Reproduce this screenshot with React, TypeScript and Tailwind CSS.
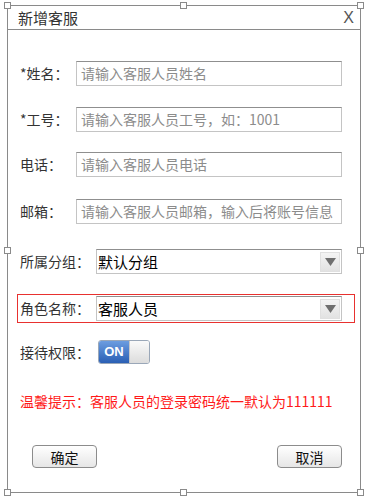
import React from "react";

const font = { fontFamily: '"Noto Sans CJK SC", "Liberation Sans", sans-serif' };

function Handle({ className }: { className: string }) {
  return <div className={`absolute w-[7px] h-[7px] bg-white border border-[#8a8a8a] ${className}`} />;
}

function TextInput({ placeholder }: { placeholder: string }) {
  return (
    <div className="w-[266px] h-[25px] border border-[#c4c4c4] border-t-[#8f8f8f] bg-white flex items-center pl-[4px] overflow-hidden whitespace-nowrap text-[14px] text-[#8c8c8c]">
      {placeholder}
    </div>
  );
}

function Select({ value }: { value: string }) {
  return (
    <div className="w-[246px] h-[25px] border border-[#c4c4c4] border-t-[#8f8f8f] bg-white flex items-center justify-between">
      <span className="pl-[1px] text-[15px] text-black leading-none">{value}</span>
      <div className="w-[20px] h-[20px] mr-[1px] bg-gradient-to-b from-[#f4f4f4] to-[#e2e2e2] border border-[#e0e0e0] flex items-center justify-center">
        <svg width="11" height="8" viewBox="0 0 11 8">
          <polygon points="0,0 11,0 5.5,8" fill="#6f6f6f" />
        </svg>
      </div>
    </div>
  );
}

export default function App() {
  return (
    <div className="relative w-[365px] h-[498px] bg-white" style={font}>
      <div className="absolute left-[183px] top-0 w-[1px] h-[3px] bg-[#e8803a]" />
      <div className="relative ml-[7px] mt-[5px] w-[354px] h-[488px] border border-[#8a8a8a] flex flex-col">
        <div className="h-[24px] border-b border-[#8a8a8a] flex items-center justify-between pl-[10px] pr-[6px]">
          <span className="text-[15px] text-[#333] leading-none">新增客服</span>
          <span className="text-[16px] text-[#555] leading-none" style={{ fontFamily: '"Liberation Sans", sans-serif' }}>X</span>
        </div>

        <div className="flex flex-col pl-[12px] text-[14px] text-[#333]">
          <div className="mt-[31px] flex items-center">
            <span className="w-[56px]">*姓名：</span>
            <TextInput placeholder="请输入客服人员姓名" />
          </div>
          <div className="mt-[21px] flex items-center">
            <span className="w-[56px]">*工号：</span>
            <TextInput placeholder="请输入客服人员工号，如：1001" />
          </div>
          <div className="mt-[20px] flex items-center">
            <span className="w-[56px]">电话：</span>
            <TextInput placeholder="请输入客服人员电话" />
          </div>
          <div className="mt-[22px] flex items-center">
            <span className="w-[56px]">邮箱：</span>
            <TextInput placeholder="请输入客服人员邮箱，输入后将账号信息" />
          </div>
          <div className="mt-[25px] flex items-center">
            <span className="w-[76px]">所属分组：</span>
            <Select value="默认分组" />
          </div>
          <div className="mt-[20px] -ml-[3px] w-[338px] border border-[#e8312f] pl-[2px] pt-[1px] pb-[1px] flex items-center">
            <span className="w-[76px]">角色名称：</span>
            <Select value="客服人员" />
          </div>
          <div className="mt-[17px] flex items-center">
            <span className="w-[78px]">接待权限：</span>
            <div className="w-[52px] h-[24px] rounded-[3px] border border-[#9aa7b8] flex overflow-hidden">
              <div className="w-[30px] h-full bg-gradient-to-b from-[#6c9de0] to-[#2a5fb4] flex items-center justify-center text-white text-[13px] font-bold" style={{ fontFamily: '"Liberation Sans", sans-serif' }}>
                ON
              </div>
              <div className="flex-1 h-full bg-gradient-to-b from-[#fafafa] to-[#dcdcdc] border-l border-[#c8c8c8]" />
            </div>
          </div>
          <div className="mt-[27px] h-[20px] leading-[20px] text-[14px] text-[#ff1a1a]">
            温馨提示：客服人员的登录密码统一默认为111111
          </div>
          <div className="mt-[34px] flex justify-between pl-[12px] w-[322px]">
            <button className="w-[65px] h-[23px] rounded-[4px] border border-[#8c8c8c] bg-gradient-to-b from-[#ffffff] to-[#e6e6e6] text-[14px] text-[#111] leading-none">确定</button>
            <button className="w-[65px] h-[23px] rounded-[4px] border border-[#8c8c8c] bg-gradient-to-b from-[#ffffff] to-[#e6e6e6] text-[14px] text-[#111] leading-none">取消</button>
          </div>
        </div>

        <Handle className="-left-[4px] -top-[4px]" />
        <Handle className="left-[172px] -top-[4px]" />
        <Handle className="-right-[4px] -top-[4px]" />
        <Handle className="-left-[4px] top-[241px]" />
        <Handle className="-right-[4px] top-[241px]" />
        <Handle className="-left-[4px] -bottom-[4px]" />
        <Handle className="left-[172px] -bottom-[4px]" />
        <Handle className="-right-[4px] -bottom-[4px]" />
      </div>
    </div>
  );
}
